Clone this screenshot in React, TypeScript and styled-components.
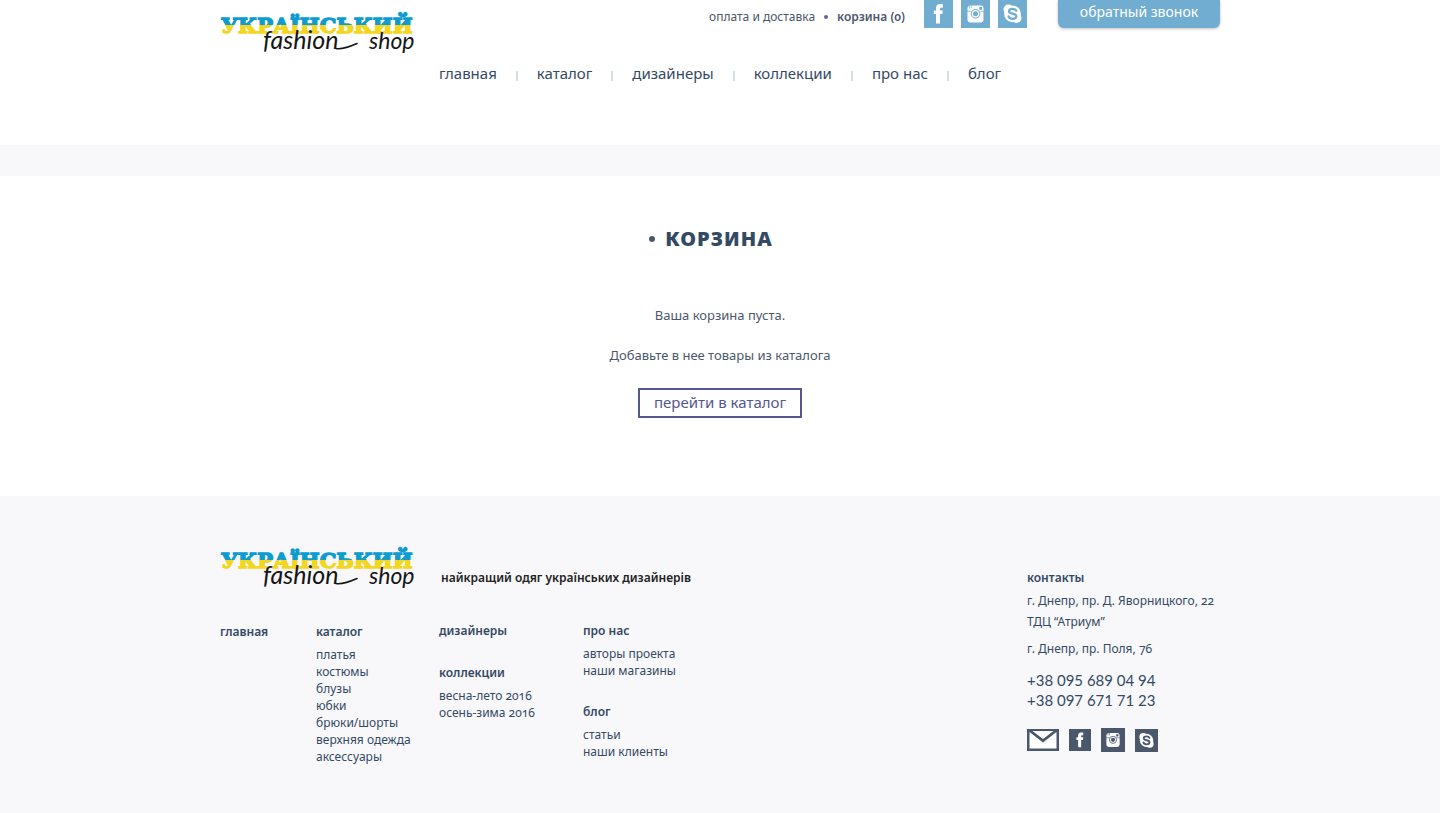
import React from "react";
import styled, { createGlobalStyle } from "styled-components";

const ink = "#344a63";
const slate = "#4b586c";
const sky = "#70add0";
const violet = "#54588f";
const mist = "#f8f8fb";

const GlobalStyle = createGlobalStyle`
  *, *::before, *::after { box-sizing: border-box; }
  body {
    margin: 0;
    background: #fff;
    color: ${ink};
    font: 13px/17px "Noto Sans", "Open Sans", sans-serif;
    font-variant-numeric: oldstyle-nums;
  }
  a { color: inherit; text-decoration: none; }
  ul, p, h1, h2 { margin: 0; padding: 0; }
  ul { list-style: none; }
`;

const Page = styled.div`
  min-height: 100vh;
  display: flex;
  flex-direction: column;
`;

const Container = styled.div`
  width: 100%;
  max-width: 1000px;
  margin: 0 auto;
`;

const Header = styled.header`
  padding-bottom: 62px;
`;

const TopRow = styled(Container)`
  display: flex;
  align-items: flex-start;
`;

const HeaderLogo = styled.a`
  display: block;
  margin-top: 11px;
  margin-right: auto;
`;

const LogoSvg = styled.svg`
  display: block;
  width: 196px;
  height: 48px;
  overflow: visible;
`;

const TopLinks = styled.div`
  display: flex;
  align-items: center;
  gap: 9px;
  margin: 8px 19px 0 0;
  color: ${slate};
`;

const TopLink = styled.a<{ $bold?: boolean }>`
  font-size: 12px;
  font-weight: ${(p) => (p.$bold ? 600 : 400)};
`;

const Dot = styled.span<{ $size: number; $color: string }>`
  flex: none;
  width: ${(p) => p.$size}px;
  height: ${(p) => p.$size}px;
  border-radius: 50%;
  background: ${(p) => p.$color};
`;

const Socials = styled.div<{ $gap: number }>`
  display: flex;
  align-items: center;
  gap: ${(p) => p.$gap}px;
`;

const SocialLink = styled.a<{ $width: number; $height: number; $fill: string }>`
  display: block;
  width: ${(p) => p.$width}px;
  height: ${(p) => p.$height}px;
  background: ${(p) => p.$fill};
  svg { display: block; width: 100%; height: 100%; }
`;

const CallButton = styled.button`
  width: 162px;
  height: 28px;
  margin-left: 31px;
  padding: 0 0 4px;
  border: 0;
  border-radius: 0 0 6px 6px;
  background: ${sky};
  box-shadow: 0 1px 3px rgba(0, 0, 0, 0.25);
  color: #fff;
  font: 14px/20px "Noto Sans", "Open Sans", sans-serif;
  cursor: pointer;
`;

const Nav = styled.nav`
  display: flex;
  justify-content: center;
  margin-top: 4px;
`;

const NavLink = styled.a`
  position: relative;
  padding: 0 20px;
  font-size: 15px;
  line-height: 20px;
  & + &::before {
    content: "";
    position: absolute;
    left: -1px;
    top: 8px;
    width: 2px;
    height: 10px;
    background: #d6deea;
  }
`;

const Band = styled.div`
  height: 31px;
  background: ${mist};
`;

const Main = styled.main`
  display: flex;
  flex-direction: column;
  align-items: center;
  padding: 49px 0 78px;
  text-align: center;
`;

const Title = styled.h1`
  display: flex;
  align-items: center;
  gap: 10px;
  margin-right: 18px;
  font: 900 20px/28px "Noto Sans", "Open Sans", sans-serif;
  letter-spacing: 1px;
`;

const Message = styled.p<{ $top: number }>`
  margin-top: ${(p) => p.$top}px;
  color: ${slate};
  font-size: 13px;
  line-height: 20px;
`;

const CatalogLink = styled.a`
  margin-top: 23px;
  padding: 0 14px 2px;
  border: 2px solid ${violet};
  color: ${violet};
  font-size: 15px;
  line-height: 24px;
`;

const Footer = styled.footer`
  flex: 1;
  padding: 50px 0 47px;
  background: ${mist};
`;

const FooterInner = styled(Container)`
  display: flex;
  justify-content: space-between;
`;

const Brand = styled.div`
  display: flex;
  align-items: flex-start;
  gap: 25px;
`;

const Tagline = styled.p`
  padding-top: 23px;
  color: #222;
  font-size: 12px;
  font-weight: 600;
`;

const Columns = styled.div`
  display: grid;
  grid-template-columns: 96px 123px 144px auto;
  margin-top: 28px;
`;

const Group = styled.section<{ $top?: number }>`
  margin-top: ${(p) => p.$top ?? 0}px;
`;

const GroupTitle = styled.h2`
  font-size: 12px;
  font-weight: 600;
  line-height: 18px;
`;

const GroupList = styled.ul`
  margin-top: 5px;
  font-size: 12px;
`;

const Contacts = styled.address`
  width: 193px;
  padding-top: 23px;
  font-style: normal;
`;

const AddressLine = styled.p<{ $top?: number }>`
  margin-top: ${(p) => p.$top ?? 0}px;
  font-size: 12px;
  line-height: 21px;
  white-space: nowrap;
`;

const Phones = styled.div`
  display: flex;
  flex-direction: column;
  margin: 11px 0 18px;
  font: 15px/20px Lato, sans-serif;
`;

function Logo({ id }: { id: string }) {
  return (
    <LogoSvg viewBox="0 0 196 48" role="img" aria-label="Український fashion shop">
      <defs>
        <linearGradient id={id} gradientUnits="userSpaceOnUse" x1="0" y1="0" x2="0" y2="24">
          <stop offset="0.58" stopColor="#0f9bcf" />
          <stop offset="0.58" stopColor="#f4d51f" />
        </linearGradient>
      </defs>
      <text
        x="1"
        y="22"
        fill={`url(#${id})`}
        stroke={`url(#${id})`}
        strokeWidth="1.400"
        fontFamily="DejaVu Serif, serif"
        fontWeight="700"
        fontSize="21"
      >
        УКРАЇНСЬКИЙ
      </text>
      <text x="43" y="38" fill="#161616" fontFamily="Lato, sans-serif" fontStyle="italic" fontSize="25">
        fashion
      </text>
      <path d="M116 37.500c6 1 12-1 21-5" fill="none" stroke="#161616" strokeWidth="1.600" strokeLinecap="round" />
      <text x="149" y="38" fill="#161616" fontFamily="Lato, sans-serif" fontStyle="italic" fontSize="23">
        shop
      </text>
    </LogoSvg>
  );
}

const FacebookIcon = () => (
  <svg viewBox="0 0 29 28" aria-hidden="true">
    <path fill="#fff" d="M12 23.5V14H9.8v-3.6H12V8.2C12 5.600 13.400 4 16 4h2.800v3.700h-1.700c-.8 0-1.100.4-1.100 1.100v1.600h2.800l-.4 3.600H16v9.500z" />
  </svg>
);

const InstagramIcon = ({ ground }: { ground: string }) => (
  <svg viewBox="0 0 29 28" aria-hidden="true">
    <rect x="6.500" y="5.500" width="16" height="17" rx="3" fill="#fff" />
    <path d="M6 11.300h4.600M18.400 11.300H23M8.500 5.500v3M10.300 5.300v3" stroke={ground} strokeWidth="0.700" />
    <rect x="18.300" y="7" width="2.800" height="2.800" rx="0.600" fill={ground} />
    <circle cx="14.500" cy="13.800" r="4.300" fill="#fff" stroke={ground} strokeWidth="1" />
    <circle cx="14.500" cy="13.800" r="2.500" fill={ground} />
  </svg>
);

const SkypeIcon = ({ ground }: { ground: string }) => (
  <svg viewBox="0 0 29 28" aria-hidden="true">
    <circle cx="10.500" cy="9.500" r="5" fill="#fff" />
    <circle cx="18.500" cy="18" r="5" fill="#fff" />
    <circle cx="14.500" cy="13.800" r="8.400" fill="#fff" />
    <path
      d="M18.200 10.800c-.6-1.500-2-2-3.700-2-2 0-3.500.9-3.500 2.400 0 3.400 7.300 1.600 7.300 5 0 1.700-1.700 2.600-3.700 2.600-2.100 0-3.600-.8-4-2.500"
      fill="none"
      stroke={ground}
      strokeWidth="2.300"
      strokeLinecap="round"
    />
  </svg>
);

const MailIcon = () => (
  <svg viewBox="0 0 32 22" aria-hidden="true">
    <path fill="#fff" d="M2.500 3v16.500h27V3L16 13.500z" />
    <path fill="#fff" d="M5.500 2h21L16 10z" />
  </svg>
);

const nav = ["главная", "каталог", "дизайнеры", "коллекции", "про нас", "блог"];

function LinkGroup({ title, items = [], top }: { title: string; items?: string[]; top?: number }) {
  return (
    <Group $top={top}>
      <GroupTitle>
        <a href="#">{title}</a>
      </GroupTitle>
      {items.length > 0 && (
        <GroupList>
          {items.map((item) => (
            <li key={item}>
              <a href="#">{item}</a>
            </li>
          ))}
        </GroupList>
      )}
    </Group>
  );
}

export default function App() {
  return (
    <Page>
      <GlobalStyle />
      <Header>
        <TopRow>
          <HeaderLogo href="#">
            <Logo id="header-logo" />
          </HeaderLogo>
          <TopLinks>
            <TopLink href="#">оплата и доставка</TopLink>
            <Dot $size={4} $color="#6460a8" />
            <TopLink href="#" $bold>корзина (0)</TopLink>
          </TopLinks>
          <Socials $gap={8}>
            <SocialLink href="#" aria-label="Facebook" $width={29} $height={28} $fill={sky}><FacebookIcon /></SocialLink>
            <SocialLink href="#" aria-label="Instagram" $width={29} $height={28} $fill={sky}><InstagramIcon ground={sky} /></SocialLink>
            <SocialLink href="#" aria-label="Skype" $width={29} $height={28} $fill={sky}><SkypeIcon ground={sky} /></SocialLink>
          </Socials>
          <CallButton type="button">обратный звонок</CallButton>
        </TopRow>
        <Nav>
          {nav.map((label) => (
            <NavLink key={label} href="#">{label}</NavLink>
          ))}
        </Nav>
      </Header>
      <Band />
      <Main>
        <Title>
          <Dot $size={6} $color={slate} />
          КОРЗИНА
        </Title>
        <Message $top={52}>Ваша корзина пуста.</Message>
        <Message $top={20}>Добавьте в нее товары из каталога</Message>
        <CatalogLink href="#">перейти в каталог</CatalogLink>
      </Main>
      <Footer>
        <FooterInner>
          <div>
            <Brand>
              <a href="#"><Logo id="footer-logo" /></a>
              <Tagline>найкращий одяг українських дизайнерів</Tagline>
            </Brand>
            <Columns>
              <LinkGroup title="главная" top={1} />
              <LinkGroup
                title="каталог"
                top={1}
                items={["платья", "костюмы", "блузы", "юбки", "брюки/шорты", "верхняя одежда", "аксессуары"]}
              />
              <div>
                <LinkGroup title="дизайнеры" />
                <LinkGroup title="коллекции" top={24} items={["весна-лето 2016", "осень-зима 2016"]} />
              </div>
              <div>
                <LinkGroup title="про нас" items={["авторы проекта", "наши магазины"]} />
                <LinkGroup title="блог" top={24} items={["статьи", "наши клиенты"]} />
              </div>
            </Columns>
          </div>
          <Contacts>
            <GroupTitle>контакты</GroupTitle>
            <AddressLine $top={3}>г. Днепр, пр. Д. Яворницкого, 22</AddressLine>
            <AddressLine>ТДЦ “Атриум”</AddressLine>
            <AddressLine $top={6}>г. Днепр, пр. Поля, 76</AddressLine>
            <Phones>
              <a href="tel:+380956890494">+38 095 689 04 94</a>
              <a href="tel:+380976717123">+38 097 671 71 23</a>
            </Phones>
            <Socials $gap={10}>
              <SocialLink href="#" aria-label="Почта" $width={32} $height={22} $fill={slate}><MailIcon /></SocialLink>
              <SocialLink href="#" aria-label="Facebook" $width={22} $height={22} $fill={slate}><FacebookIcon /></SocialLink>
              <SocialLink href="#" aria-label="Instagram" $width={24} $height={24} $fill={slate}><InstagramIcon ground={slate} /></SocialLink>
              <SocialLink href="#" aria-label="Skype" $width={23} $height={23} $fill={slate}><SkypeIcon ground={slate} /></SocialLink>
            </Socials>
          </Contacts>
        </FooterInner>
      </Footer>
    </Page>
  );
}
